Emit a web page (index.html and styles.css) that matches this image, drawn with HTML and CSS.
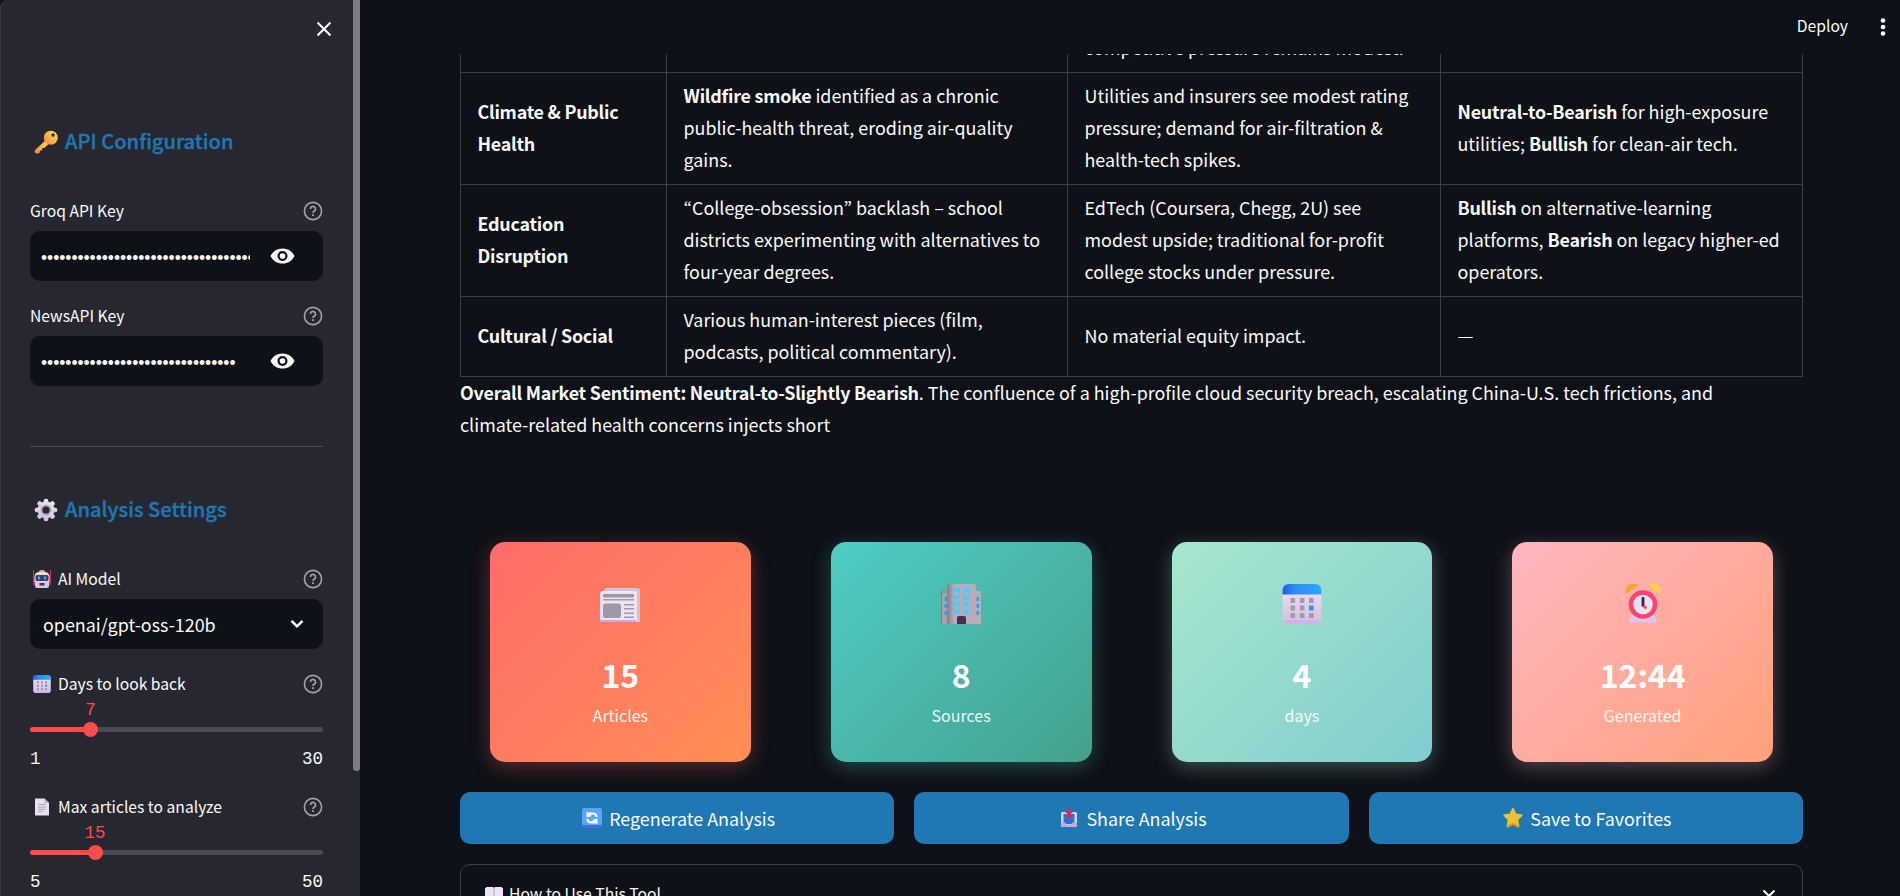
FILE: index.html
```html
<!DOCTYPE html>
<html lang="en">
<head>
<meta charset="utf-8">
<title>News Analysis</title>
<link rel="stylesheet" href="styles.css">
</head>
<body>
<svg class="defs" width="0" height="0">
  <defs>
    <linearGradient id="gold" x1="1" y1="0" x2="0" y2="1"><stop offset="0" stop-color="#ffe04a"/><stop offset=".5" stop-color="#fdb642"/><stop offset="1" stop-color="#f08060"/></linearGradient>
    <linearGradient id="lilac" x1="0" y1="0" x2="0" y2="1"><stop offset="0" stop-color="#ebe2f2"/><stop offset="1" stop-color="#d3bfe0"/></linearGradient>
    <linearGradient id="blue" x1="0" y1="0" x2="1" y2="0"><stop offset="0" stop-color="#2458dc"/><stop offset=".3" stop-color="#2b8df8"/><stop offset="1" stop-color="#30a5ff"/></linearGradient>
    <linearGradient id="wall" x1="0" y1="0" x2="1" y2="0"><stop offset="0" stop-color="#857b88"/><stop offset=".25" stop-color="#b7acb9"/><stop offset="1" stop-color="#b9adb9"/></linearGradient>
    <symbol id="help" viewBox="0 0 20 20"><circle cx="10" cy="10" r="8.6" fill="none" stroke="#a3a3a7" stroke-width="1.6"/><path d="M7.500 8a2.500 2.500 0 1 1 3.800 2.100c-.8.5-1.300.9-1.300 1.900" fill="none" stroke="#a3a3a7" stroke-width="1.700"/><rect x="9.100" y="13.200" width="1.800" height="1.800" fill="#a3a3a7"/></symbol>
    <symbol id="eye" viewBox="0 0 24 16"><path d="M12 .4C6.600.4 2 3.500 0 8c2 4.500 6.600 7.600 12 7.600S22 12.500 24 8C22 3.500 17.400.4 12 .4Z" fill="#fafafa"/><circle cx="12" cy="8" r="5" fill="#0e1117"/><circle cx="12" cy="8" r="2.800" fill="#fafafa"/></symbol>
    <symbol id="calendar" viewBox="0 0 40 40">
      <rect x=".5" y="1" width="39" height="39" rx="6" fill="url(#lilac)"/><path d="M2 36q1 4 5 4h26q4 0 5-4z" fill="#cfb4ec"/>
      <path d="M.5 10.500V7q0-7 7-7h25q7 0 7 7v3.500z" fill="url(#blue)"/>
      <path d="M8.500 14h4.600v5H8.500zM17.800 14h4.600v5h-4.600zM27 14h4.600v5H27zM8.500 21.500h4.600v5H8.500zM17.800 21.500h4.600v5h-4.600zM8.500 29h4.600v5H8.500zM17.800 29h4.600v5h-4.600zM27 29h4.600v5H27z" fill="#a39aae"/><path d="M27 21.500h4.600v5H27z" fill="#2b93f5"/>
    </symbol>
  </defs>
</svg>
<div class="app">
  <aside class="sidebar">
    <div class="sidebar-content">
      <div class="close-row"><svg width="16" height="16" viewBox="0 0 16 16"><path d="M1.500 1.500l13 13M14.500 1.500l-13 13" stroke="#fafafa" stroke-width="2.100"/></svg></div>
      <h3 class="heading">
        <svg width="24" height="24" viewBox="0 0 24 24"><path d="M12.500 9.500L1 20q-1 3 1.500 3.500l3-.5.5-2.500h2l.5-2.500h2l5-5z" fill="url(#gold)"/><circle cx="16.800" cy="7.700" r="7" fill="url(#gold)"/><circle cx="19" cy="5" r="1.700" fill="#262730"/></svg>
        <span>API Configuration</span>
      </h3>
      <div class="field">
        <div class="label"><span>Groq API Key</span><svg class="help"><use href="#help"/></svg></div>
        <div class="input"><span class="secret">•••••••••••••••••••••••••••••••••••••••</span><svg class="eye"><use href="#eye"/></svg></div>
      </div>
      <div class="field">
        <div class="label"><span>NewsAPI Key</span><svg class="help"><use href="#help"/></svg></div>
        <div class="input"><span class="secret">••••••••••••••••••••••••••••••••</span><svg class="eye"><use href="#eye"/></svg></div>
      </div>
      <hr class="rule">
      <h3 class="heading">
        <svg width="24" height="24" viewBox="-12 -12 24 24"><g fill="url(#lilac)"><circle r="8.500"/><g id="teeth"><rect x="-2.300" y="-11.300" width="4.600" height="22.600" rx="2"/><rect x="-11.300" y="-2.300" width="22.600" height="4.600" rx="2"/></g><use href="#teeth" transform="rotate(45)"/></g><circle r="5.200" fill="#a99db5"/><circle r="3.500" fill="#262730"/></svg>
        <span>Analysis Settings</span>
      </h3>
      <div class="field">
        <div class="label"><svg class="emoji" viewBox="0 0 18 18"><path d="M.5 0v14M17.500 0v14" stroke="#d52b57" stroke-width="1.200"/><rect y="6" width="3" height="9" rx="1" fill="#c42e55"/><rect x="15" y="6" width="3" height="9" rx="1" fill="#c42e55"/><rect x="6" width="6" height="4" rx="1.500" fill="#f4a83c"/><path d="M1.500 7q0-5 5-5h5q5 0 5 5v5h-15z" fill="#e5dcee"/><rect x="2.500" y="5" width="13" height="6" rx="1.500" fill="#403d67"/><path d="M5 6.500h2v3H5zM11 6.500h2v3h-2z" fill="#21b5ff"/><path d="M2 11.500h14V16q0 2-2 2H4q-2 0-2-2z" fill="#d8c6e5"/><rect x="6.500" y="13" width="5" height="2.500" fill="#423952"/></svg><span>AI Model</span><svg class="help"><use href="#help"/></svg></div>
        <div class="input select"><span>openai/gpt-oss-120b</span><svg width="14" height="10" viewBox="0 0 14 10"><path d="M1.500 1.800L7 7.300l5.500-5.500" fill="none" stroke="#fafafa" stroke-width="2.500"/></svg></div>
      </div>
      <div class="field slider-field">
        <div class="label"><svg class="emoji"><use href="#calendar"/></svg><span>Days to look back</span><svg class="help"><use href="#help"/></svg></div>
        <div class="slider" style="--pos:20.69%"><span class="value">7</span><i class="thumb"></i></div>
        <div class="range"><span>1</span><span>30</span></div>
      </div>
      <div class="field slider-field">
        <div class="label"><svg class="emoji" viewBox="0 0 18 18"><path d="M2 .5h9.500L16 5v12.500H2z" fill="#e8dff0"/><path d="M11.500.5V5H16z" fill="#bdb0c8"/><path d="M5 6.500h8M5 9h8M5 11.300h8M5 13.600h5" stroke="#aaa0b2"/></svg><span>Max articles to analyze</span><svg class="help"><use href="#help"/></svg></div>
        <div class="slider" style="--pos:22.22%"><span class="value">15</span><i class="thumb"></i></div>
        <div class="range"><span>5</span><span>50</span></div>
      </div>
    </div>
    <div class="scrollbar"></div>
  </aside>
  <main class="main">
    <header class="topbar"><span>Deploy</span><svg width="6" height="20" viewBox="0 0 6 20"><g fill="#fafafa"><circle cx="3" cy="3.500" r="2.300"/><circle cx="3" cy="10" r="2.300"/><circle cx="3" cy="16.500" r="2.300"/></g></svg></header>
    <div class="scroller">
      <table class="report">
        <colgroup><col class="c1"><col class="c2"><col class="c3"><col class="c4"></colgroup>
        <tr><td></td><td></td><td>competitive pressure remains modest.</td><td></td></tr>
        <tr><td><b>Climate &amp; Public<br>Health</b></td><td><b>Wildfire smoke</b> identified as a chronic<br>public-health threat, eroding air-quality<br>gains.</td><td>Utilities and insurers see modest rating<br>pressure; demand for air-filtration &amp;<br>health-tech spikes.</td><td><b>Neutral-to-Bearish</b> for high-exposure<br>utilities; <b>Bullish</b> for clean-air tech.</td></tr>
        <tr><td><b>Education<br>Disruption</b></td><td>“College-obsession” backlash – school<br>districts experimenting with alternatives to<br>four-year degrees.</td><td>EdTech (Coursera, Chegg, 2U) see<br>modest upside; traditional for-profit<br>college stocks under pressure.</td><td><b>Bullish</b> on alternative-learning<br>platforms, <b>Bearish</b> on legacy higher-ed<br>operators.</td></tr>
        <tr><td><b>Cultural / Social</b></td><td>Various human-interest pieces (film,<br>podcasts, political commentary).</td><td>No material equity impact.</td><td>—</td></tr>
      </table>
      <p class="summary"><b>Overall Market Sentiment: Neutral-to-Slightly Bearish</b>. The confluence of a high-profile cloud security breach, escalating China-U.S. tech frictions, and<br>climate-related health concerns injects short</p>
      <section class="metrics">
        <div class="card articles">
          <svg width="40" height="40" viewBox="0 0 40 40"><path d="M4 7q0-3 3-3h30q3 0 3 3v31H4z" fill="#cbc5d6"/><path d="M0 10q0-3 3-3h32q2 0 2 3v28H0z" fill="#ece4f6"/><path d="M0 36h36v2H0z" fill="#cba8e3"/><g fill="#9e98a7"><rect x="3" y="10" width="31" height="3.500" rx="1"/><rect x="3" y="15" width="31" height="1.500"/><rect x="3" y="19.500" width="18" height="14.500" rx="2.500"/><path d="M24 20h10v1.400H24zM24 24h10v1.400H24zM24 28.500h10V30H24zM24 32.500h10v1.400H24z"/></g></svg>
          <strong>15</strong><span>Articles</span>
        </div>
        <div class="card sources">
          <svg width="40" height="40" viewBox="0 0 40 40"><path d="M0 9q0-2 2-2h36q2 0 2 2v31H0z" fill="url(#wall)"/><path d="M1 9h5v31H1z" fill="#aaa0ab"/><path d="M6 3q0-3 3-3h23q3 0 3 3v37H6z" fill="url(#wall)"/><path d="M13 4h6v4.500h-6zM22 4h6v4.500h-6zM13 11h6v4.500h-6zM22 11h6v4.500h-6zM13 18h6v4.500h-6zM22 18h6v4.500h-6zM13 25h6v4.500h-6zM22 25h6v4.500h-6z" fill="#4bcaff"/><path d="M3.500 13H6v4H3.500zM3.500 20H6v4H3.500zM3.500 27H6v4H3.500zM35.500 13H38v4h-2.500zM35.500 20H38v4h-2.500zM35.500 27H38v4h-2.500z" fill="#2f9df2"/><path d="M16 40v-6q0-2 2-2h5q2 0 2 2v6z" fill="#43344e"/></svg>
          <strong>8</strong><span>Sources</span>
        </div>
        <div class="card days">
          <svg width="40" height="40"><use href="#calendar"/></svg>
          <strong>4</strong><span>days</span>
        </div>
        <div class="card generated">
          <svg width="40" height="40" viewBox="0 0 40 40"><path d="M6 37q1-6 7-8h14q6 2 7 8 0 1.500-2 1.500H8q-2 0-2-1.500z" fill="#dcc5ee"/><path d="M3 10C1 4 6-3 13-1q3 1 1 3z" fill="#f6a637"/><path d="M37 10C39 4 34-3 27-1q-3 1-1 3z" fill="#fbd23f"/><circle cx="20" cy="20.500" r="14.300" fill="#fb4270"/><circle cx="20" cy="20.500" r="9.800" fill="#e9e1ef"/><path d="M20 14.500v7" stroke="#35213f" stroke-width="2.800" stroke-linecap="round"/><path d="M20.300 21.500l3 3" stroke="#fb4262" stroke-width="2.500"/></svg>
          <strong>12:44</strong><span>Generated</span>
        </div>
      </section>
      <section class="actions">
        <div class="button"><svg width="20" height="20" viewBox="0 0 20 20"><rect width="20" height="20" rx="2" fill="#57a6fc"/><path d="M0 17h20v1q0 2-2 2H2q-2 0-2-2z" fill="#3a70df"/><path d="M6 5.500h5q3.500 0 3.500 3.500M14 14.500H9.500Q5.500 14.500 5.500 11" fill="none" stroke="#fff" stroke-width="2.200"/><path d="M4.500 3.500v6L10 8zM15.500 16.500v-6L10 12z" fill="#fff"/></svg><span>Regenerate Analysis</span></div>
        <div class="button"><svg width="20" height="20" viewBox="0 0 20 20"><path d="M3.500 4h13q1.500 0 1.500 1.500V18q0 1-1 1H3q-1 0-1-1V5.500Q2 4 3.500 4z" fill="#d9d0e4"/><path d="M4.500 6h11v10h-11z" fill="#2477d0"/><path d="M2 14.500h4.500Q7 17 10 17t3.500-2.500H18V18q0 1-1 1H3q-1 0-1-1z" fill="#c0aad6"/><path d="M10 0l4 5h-2v5H8V5H6z" fill="#dc2858"/></svg><span>Share Analysis</span></div>
        <div class="button"><svg width="20" height="20" viewBox="0 0 20 20"><path d="M10 1l2.600 5.500 6 .8-4.400 4.200 1.300 7L10 15.800l-5.500 2.700 1.300-7L1.400 7.300l6-.8z" fill="#edc22f" stroke="#edc22f" stroke-width="2" stroke-linejoin="round"/><path d="M4.500 18.500L10 15.800l5.500 2.700" fill="none" stroke="#d49320" stroke-width="1.500" stroke-linecap="round"/></svg><span>Save to Favorites</span></div>
      </section>
      <div class="expander"><svg width="18" height="14" viewBox="0 0 18 14"><path d="M0 1.500L1.500 0H8l1 1 1-1h6.500L18 1.500V14H0z" fill="#ece4f6"/><path d="M9 1v13" stroke="#bcaecb" stroke-width="1.200"/></svg><span>How to Use This Tool</span><svg class="chevron" width="14" height="10" viewBox="0 0 14 10"><path d="M1.500 1.500L7 7l5.500-5.500" fill="none" stroke="#fafafa" stroke-width="2.100"/></svg></div>
    </div>
  </main>
</div>
</body>
</html>
```

FILE: styles.css
```css
* { box-sizing: border-box; }
body { margin: 0; background: #0e1117; color: #fafafa; font: 17.9px/32px "Noto Sans CJK KR", "Noto Sans", sans-serif; }
.defs { position: absolute; }
.app { display: flex; height: 896px; overflow: hidden; }
svg { flex: none; display: block; }
b { font-weight: 600; letter-spacing: -.23px; }

.sidebar { display: flex; width: 360px; flex: none; background: #262730; border-left: 1px solid #40343f; border-top-left-radius: 8px; }
.sidebar-content { flex: 1; padding: 0 30px 0 29px; overflow: hidden; }
.scrollbar { width: 7px; height: 771px; background: #7e7d82; border-radius: 0 0 4px 4px; }
.close-row { display: flex; justify-content: flex-end; align-items: center; height: 57px; margin-right: -8.5px; }
.heading { display: flex; align-items: center; gap: 7px; height: 32px; margin: 69px 0 38px; padding-left: 4px; color: #1f77b4; font-size: 20.1px; font-weight: 500; -webkit-text-stroke: .35px #1f77b4; }
.heading span { padding-bottom: 2px; }
.field { margin-bottom: 20px; }
.label { display: flex; align-items: center; gap: 7px; height: 30px; margin-bottom: 5px; font-size: 15.67px; }
.help { width: 20px; height: 20px; margin-left: auto; }
.emoji { width: 18px; height: 18px; margin-left: 3px; }
.input { display: flex; align-items: center; height: 50px; border-radius: 10px; background: #0e1117; padding: 0 28px 0 11px; }
.secret { width: 209px; overflow: hidden; white-space: nowrap; font: 17.5px/30px "Liberation Sans", sans-serif; letter-spacing: -.05px; padding-top: 3px; }
.eye { width: 25px; height: 16px; margin-left: auto; }
.select { justify-content: space-between; padding: 0 19px 0 13px; }
.rule { height: 1px; margin: 60px 0 47px; border: 0; background: #4b4c54; }
.rule + .heading { margin: 47px 0 38px; }
.slider-field { margin-bottom: 21px; }
.slider-field .label { margin-bottom: 0; }
.slider { position: relative; height: 5px; margin-top: 28px; border-radius: 3px; background: linear-gradient(90deg, #ff4b4b var(--pos), #4a4b55 var(--pos)); }
.value, .range { font: 17.5px/24px "Liberation Mono", monospace; }
.value { position: absolute; left: var(--pos); bottom: 10px; transform: translateX(-50%); color: #ff4b4b; }
.thumb { position: absolute; left: var(--pos); top: -5px; width: 15px; height: 15px; margin-left: -7.5px; border-radius: 50%; background: #ff4b4b; }
.range { display: flex; justify-content: space-between; margin-top: 15px; }

.main { flex: 1; display: flex; flex-direction: column; min-width: 0; }
.topbar { display: flex; flex: none; justify-content: flex-end; align-items: center; gap: 32px; height: 54px; padding-right: 14px; font-size: 15.67px; }
.topbar span { padding-bottom: 2px; }
.scroller { flex: 1; min-height: 0; overflow: hidden; padding: 0 97px 0 100px; }
.report { width: 1343px; margin: -30px 0 0; border-collapse: collapse; table-layout: fixed; white-space: nowrap; }
.report td { height: 48px; padding: 5.5px 14.5px 9.5px 16.5px; border: 1px solid #3d4043; vertical-align: middle; }
.c1 { width: 206px; } .c2 { width: 401px; } .c3 { width: 373px; } .c4 { width: 362px; }
.summary { margin: -1px 0 102px; white-space: nowrap; }
.metrics { display: grid; grid-template-columns: repeat(4, 1fr); gap: 80px; padding: 0 30px; }
.card { display: flex; flex-direction: column; align-items: center; height: 220px; padding-top: 42px; border-radius: 15px; color: #fff; }
.card strong { margin-top: 28px; font-size: 32px; line-height: 44px; font-weight: 700; }
.card span { margin-top: 5px; font-size: 16px; line-height: 28px; opacity: .9; }
.articles { background: linear-gradient(135deg, #ff6b6b, #ff8e53); box-shadow: 0 5px 19px rgba(255,107,107,.3); }
.sources { background: linear-gradient(135deg, #4ecdc4, #44a08d); box-shadow: 0 5px 19px rgba(78,205,196,.3); }
.days { background: linear-gradient(135deg, #a8e6cf, #7fcdcd); box-shadow: 0 5px 19px rgba(168,230,207,.3); }
.generated { background: linear-gradient(135deg, #ffb6c1, #ffa07a); box-shadow: 0 5px 19px rgba(255,182,193,.3); }
.actions { display: grid; grid-template-columns: repeat(3, 1fr); gap: 20px; margin-top: 30px; }
.button { display: flex; align-items: center; justify-content: center; gap: 7px; height: 52px; padding-left: 3px; border-radius: 10px; background: #1f77b4; }
.expander { display: flex; align-items: center; height: 60px; margin-top: 20px; padding: 0 26px 0 24px; border: 1px solid #3d4043; border-radius: 10px; font-size: 15.67px; gap: 6px; }
.chevron { margin-left: auto; }
```
